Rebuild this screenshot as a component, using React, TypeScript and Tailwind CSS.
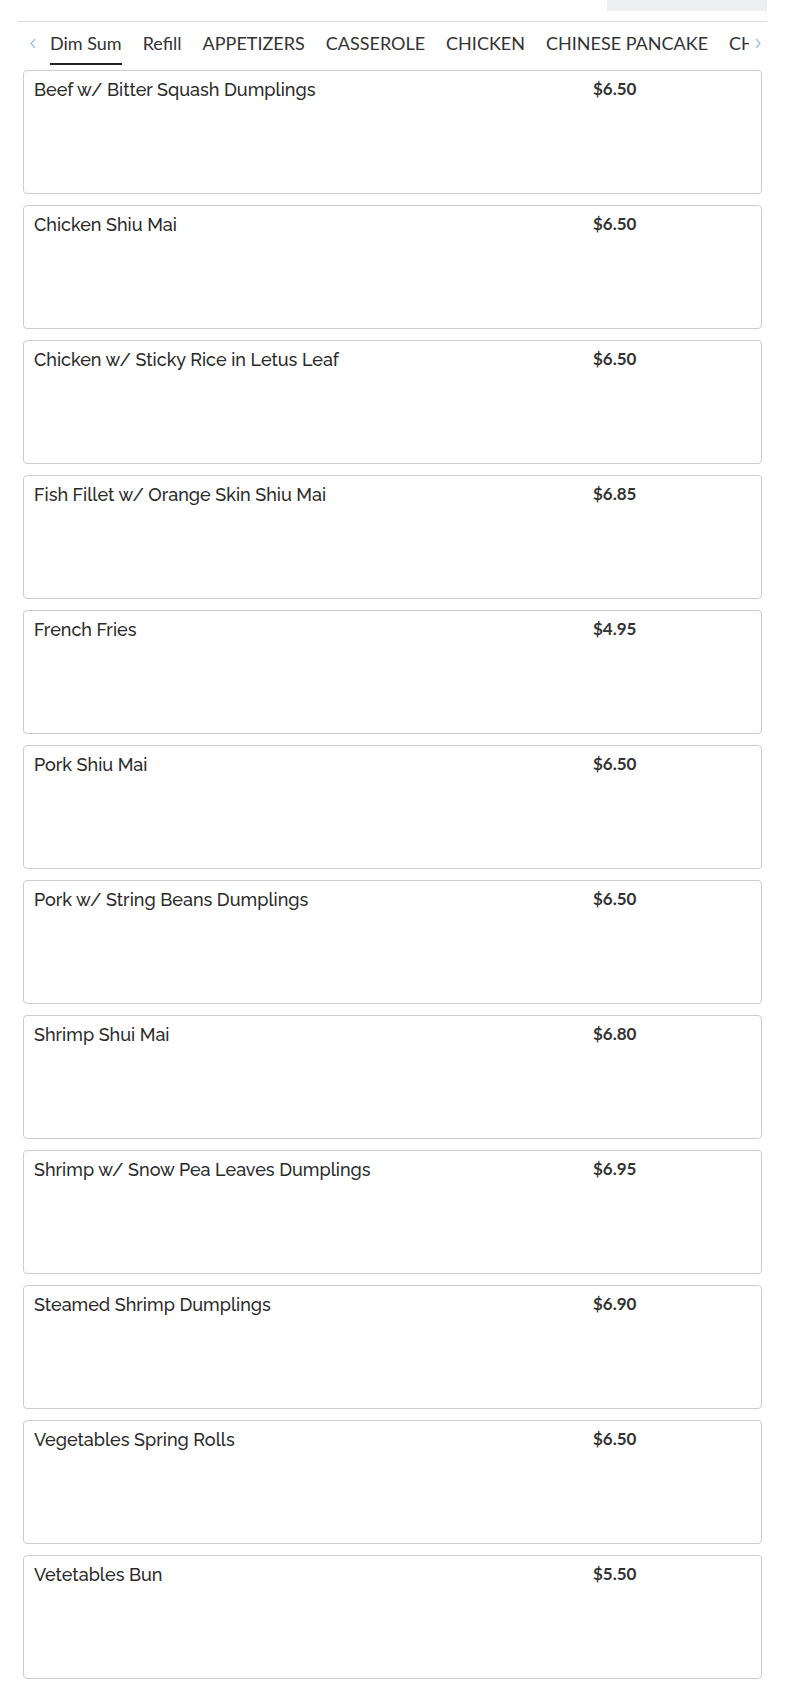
import React from "react";

type Item = { name: string; price: string };

const tabs = ["Dim Sum", "Refill", "APPETIZERS", "CASSEROLE", "CHICKEN", "CHINESE PANCAKE", "CHOW MEIN"];

const items: Item[] = [
  { name: "Beef w/ Bitter Squash Dumplings", price: "$6.50" },
  { name: "Chicken Shiu Mai", price: "$6.50" },
  { name: "Chicken w/ Sticky Rice in Letus Leaf", price: "$6.50" },
  { name: "Fish Fillet w/ Orange Skin Shiu Mai", price: "$6.85" },
  { name: "French Fries", price: "$4.95" },
  { name: "Pork Shiu Mai", price: "$6.50" },
  { name: "Pork w/ String Beans Dumplings", price: "$6.50" },
  { name: "Shrimp Shui Mai", price: "$6.80" },
  { name: "Shrimp w/ Snow Pea Leaves Dumplings", price: "$6.95" },
  { name: "Steamed Shrimp Dumplings", price: "$6.90" },
  { name: "Vegetables Spring Rolls", price: "$6.50" },
  { name: "Vetetables Bun", price: "$5.50" },
];

function Chevron({ dir }: { dir: "left" | "right" }) {
  return (
    <svg width="8" height="11" viewBox="0 0 8 11" fill="none">
      <path
        d={dir === "left" ? "M6 1 L2 5.5 L6 10" : "M2 1 L6 5.5 L2 10"}
        stroke="#8fc3e6"
        strokeWidth="1.3"
      />
    </svg>
  );
}

export default function App() {
  return (
    <div className="w-[785px] min-h-[1702px] bg-white text-[#333] font-['Lato','Liberation_Sans',sans-serif]">
      <div className="mx-[18px]">
        {/* search box bottom edge */}
        <div className="flex justify-end">
          <div className="h-[11px] w-[160px] bg-[#eeeff1]" />
        </div>

        {/* category tabs */}
        <div className="mt-[10px] border-t border-[#d9d9d9] flex items-center">
          <div className="w-[29px] flex justify-center">
            <Chevron dir="left" />
          </div>
          <div className="flex-1 overflow-hidden pl-[3px]">
            <div className="flex gap-[21px] whitespace-nowrap">
              {tabs.map((t, i) => (
                <div
                  key={t}
                  className={`pt-[10px] pb-[9px] text-[18px] leading-[22px] border-b-2 ${
                    i === 0 ? "border-[#222]" : "border-transparent"
                  }`}
                >
                  {t}
                </div>
              ))}
            </div>
          </div>
          <div className="w-[18px] flex justify-center">
            <Chevron dir="right" />
          </div>
        </div>

        {/* menu items */}
        <div className="mt-[5px] px-[5px] flex flex-col gap-[11px]">
          {items.map((it) => (
            <div key={it.name} className="h-[124px] border border-[#cccccc] rounded-[4px] pl-[10px] pt-[6px]">
              <div className="flex items-start">
                <div className="w-[559px] mt-[1px] text-[18px] leading-[24px] font-medium text-[#2b2b2b] font-['Raleway','Lato',sans-serif]">
                  {it.name}
                </div>
                <div className="text-[17px] leading-[24px] font-bold">{it.price}</div>
              </div>
            </div>
          ))}
        </div>
      </div>
    </div>
  );
}
